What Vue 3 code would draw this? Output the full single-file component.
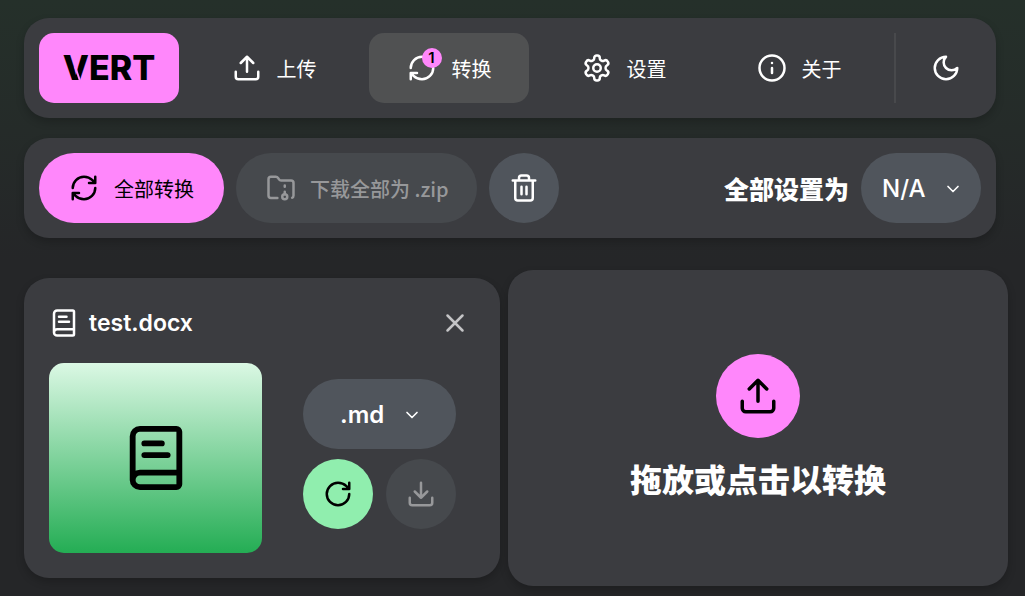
<script setup>
import { ref } from 'vue'

const dark = ref(true)
const allFormat = ref('N/A')
const fileFormat = ref('.md')
</script>

<template>
  <div class="page">
    <header class="panel navbar">
      <a class="logo" href="#" aria-label="VERT"><span class="wordmark">VERT</span></a>
      <nav class="links">
        <a class="link" href="#upload">
          <svg class="icon" viewBox="0 0 24 24"><path d="M12 3v12M17 8l-5-5-5 5M21 15v4a2 2 0 0 1-2 2H5a2 2 0 0 1-2-2v-4" /></svg>
          <span>上传</span>
        </a>
        <a class="link active" href="#convert">
          <span class="badged">
            <svg class="icon" viewBox="0 0 24 24"><path d="M3 12a9 9 0 0 1 9-9 9.75 9.75 0 0 1 6.74 2.74L21 8M21 3v5h-5M21 12a9 9 0 0 1-9 9 9.75 9.75 0 0 1-6.74-2.74L3 16M8 16H3v5" /></svg>
            <span class="badge">1</span>
          </span>
          <span>转换</span>
        </a>
        <a class="link" href="#settings">
          <svg class="icon" viewBox="0 0 24 24"><path d="M12.22 2h-.44a2 2 0 0 0-2 2v.18a2 2 0 0 1-1 1.73l-.43.25a2 2 0 0 1-2 0l-.15-.08a2 2 0 0 0-2.73.73l-.22.38a2 2 0 0 0 .73 2.73l.15.1a2 2 0 0 1 1 1.72v.51a2 2 0 0 1-1 1.74l-.15.09a2 2 0 0 0-.73 2.73l.22.38a2 2 0 0 0 2.73.73l.15-.08a2 2 0 0 1 2 0l.43.25a2 2 0 0 1 1 1.73V20a2 2 0 0 0 2 2h.44a2 2 0 0 0 2-2v-.18a2 2 0 0 1 1-1.73l.43-.25a2 2 0 0 1 2 0l.15.08a2 2 0 0 0 2.73-.73l.22-.39a2 2 0 0 0-.73-2.73l-.15-.08a2 2 0 0 1-1-1.74v-.5a2 2 0 0 1 1-1.74l.15-.09a2 2 0 0 0 .73-2.73l-.22-.38a2 2 0 0 0-2.73-.73l-.15.08a2 2 0 0 1-2 0l-.43-.25a2 2 0 0 1-1-1.73V4a2 2 0 0 0-2-2z" /><circle cx="12" cy="12" r="3" /></svg>
          <span>设置</span>
        </a>
        <a class="link" href="#about">
          <svg class="icon" viewBox="0 0 24 24"><circle cx="12" cy="12" r="10" /><path d="M12 16v-4M12 8h.01" /></svg>
          <span>关于</span>
        </a>
      </nav>
      <div class="divider"></div>
      <button class="theme" type="button" aria-label="切换主题" @click="dark = !dark">
        <svg class="icon" viewBox="0 0 24 24"><path d="M12 3a6 6 0 0 0 9 9 9 9 0 1 1-9-9Z" /></svg>
      </button>
    </header>

    <section class="panel toolbar">
      <button class="pill primary" type="button">
        <svg class="icon" viewBox="0 0 24 24"><path d="M3 12a9 9 0 0 1 9-9 9.75 9.75 0 0 1 6.74 2.74L21 8M21 3v5h-5M21 12a9 9 0 0 1-9 9 9.75 9.75 0 0 1-6.74-2.74L3 16M8 16H3v5" /></svg>
        全部转换
      </button>
      <button class="pill muted" type="button" disabled>
        <svg class="icon" viewBox="0 0 24 24"><circle cx="15" cy="19" r="2" /><path d="M20.9 19.8A2 2 0 0 0 22 18V8a2 2 0 0 0-2-2h-7.9a2 2 0 0 1-1.69-.9L9.6 3.9A2 2 0 0 0 7.93 3H4a2 2 0 0 0-2 2v13a2 2 0 0 0 2 2h5.1M15 11v-1M15 17v-2" /></svg>
        下载全部为 .zip
      </button>
      <button class="round slate" type="button" aria-label="清空">
        <svg class="icon" viewBox="0 0 24 24"><path d="M3 6h18M19 6v14a2 2 0 0 1-2 2H7a2 2 0 0 1-2-2V6M8 6V4a2 2 0 0 1 2-2h4a2 2 0 0 1 2 2v2M10 11v6M14 11v6" /></svg>
      </button>
      <label class="set-all" for="all-format">全部设置为</label>
      <div class="dropdown small">
        <select id="all-format" v-model="allFormat"><option>N/A</option></select>
        <svg class="icon chevron" viewBox="0 0 24 24"><path d="m6 9 6 6 6-6" /></svg>
      </div>
    </section>

    <main class="files">
      <article class="panel card">
        <div class="card-head">
          <svg class="icon" viewBox="0 0 24 24"><path d="M4 19.5v-15A2.5 2.5 0 0 1 6.5 2H19a1 1 0 0 1 1 1v18a1 1 0 0 1-1 1H6.5a1 1 0 0 1 0-5H20M8 11h8M8 7h6" /></svg>
          <h2>test.docx</h2>
          <button class="close" type="button" aria-label="移除">
            <svg class="icon" viewBox="0 0 24 24"><path d="M18 6 6 18M6 6l12 12" /></svg>
          </button>
        </div>
        <div class="card-body">
          <div class="preview">
            <svg class="icon" viewBox="0 0 24 24"><path d="M4 19.5v-15A2.5 2.5 0 0 1 6.5 2H19a1 1 0 0 1 1 1v18a1 1 0 0 1-1 1H6.5a1 1 0 0 1 0-5H20M8 11h8M8 7h6" /></svg>
          </div>
          <div class="actions">
            <div class="dropdown large">
              <select v-model="fileFormat" aria-label="格式"><option>.md</option></select>
              <svg class="icon chevron" viewBox="0 0 24 24"><path d="m6 9 6 6 6-6" /></svg>
            </div>
            <div class="action-row">
              <button class="round green" type="button" aria-label="转换">
                <svg class="icon" viewBox="0 0 24 24"><path d="M21 12a9 9 0 1 1-9-9c2.52 0 4.93 1 6.74 2.74L21 8M21 3v5h-5" /></svg>
              </button>
              <button class="round muted" type="button" aria-label="下载" disabled>
                <svg class="icon" viewBox="0 0 24 24"><path d="M21 15v4a2 2 0 0 1-2 2H5a2 2 0 0 1-2-2v-4M7 10l5 5 5-5M12 15V3" /></svg>
              </button>
            </div>
          </div>
        </div>
      </article>

      <button class="panel dropzone" type="button">
        <span class="drop-icon">
          <svg class="icon" viewBox="0 0 24 24"><path d="M12 3v12M17 8l-5-5-5 5M21 15v4a2 2 0 0 1-2 2H5a2 2 0 0 1-2-2v-4" /></svg>
        </span>
        <span>拖放或点击以转换</span>
      </button>
    </main>
  </div>
</template>

<style>
body {
  margin: 0;
  background: #252628;
}
</style>

<style scoped>
.page {
  box-sizing: border-box;
  min-height: 100vh;
  padding: 18px 29px 18px 24px;
  display: flex;
  flex-direction: column;
  gap: 20px;
  color: #fff;
  font-family: Inter, "Noto Sans CJK SC", sans-serif;
  font-size: 20px;
  background: linear-gradient(#25302a, #252628 260px);
}
button,
select {
  margin: 0;
  padding: 0;
  border: 0;
  color: inherit;
  font: inherit;
  background: none;
  cursor: pointer;
}
a {
  color: inherit;
  text-decoration: none;
}
.icon {
  display: block;
  flex: none;
  width: 30px;
  height: 30px;
  fill: none;
  stroke: currentColor;
  stroke-width: 2;
  stroke-linecap: round;
  stroke-linejoin: round;
}
.panel {
  box-sizing: border-box;
  border-radius: 25px;
  background: #3b3c40;
  box-shadow: 0 4px 8px rgba(0, 0, 0, 0.2);
}
.navbar {
  display: flex;
  gap: 15px;
  padding: 15px;
}
.logo {
  display: flex;
  align-items: center;
  justify-content: center;
  width: 140px;
  height: 70px;
  border-radius: 15px;
  color: #000;
  background: #ff87fb;
}
.wordmark {
  position: relative;
  font-size: 34px;
  font-weight: 800;
  line-height: 40px;
}
.wordmark::after {
  content: "";
  position: absolute;
  left: 14px;
  top: 18px;
  width: 2px;
  height: 18px;
  background: #ff87fb;
  transform: rotate(-19deg);
}
.links {
  flex: 1;
  display: grid;
  grid-template-columns: repeat(4, 1fr);
  gap: 15px;
}
.link {
  display: flex;
  align-items: center;
  justify-content: center;
  gap: 15px;
  border-radius: 15px;
}
.active {
  background: #505152;
}
.badged {
  position: relative;
}
.badge {
  position: absolute;
  top: -5px;
  right: -5px;
  width: 20px;
  height: 20px;
  border-radius: 50%;
  color: #000;
  background: #ff87fb;
  font-size: 15px;
  font-weight: 600;
  line-height: 20px;
  text-align: center;
}
.divider {
  width: 2px;
  background: #48494c;
}
.theme {
  display: grid;
  place-items: center;
  width: 70px;
  height: 70px;
}
.toolbar {
  display: flex;
  align-items: center;
  gap: 12px;
  padding: 15px;
}
.pill {
  display: flex;
  align-items: center;
  gap: 15px;
  height: 70px;
  padding: 0 30px;
  border-radius: 35px;
}
.primary {
  color: #000;
  background: #ff87fb;
}
.muted {
  color: #97989a;
  background: #46494d;
  font-family: "Noto Sans CJK SC", sans-serif;
  font-weight: 500;
  cursor: default;
}
.pill.muted {
  gap: 14px;
  padding-right: 28px;
}
.round {
  display: grid;
  place-items: center;
  width: 70px;
  height: 70px;
  border-radius: 50%;
}
.slate {
  background: #50555c;
}
.green {
  color: #000;
  background: #90eeae;
}
.set-all {
  margin-left: auto;
  font-size: 25px;
  font-weight: 900;
}
.dropdown {
  position: relative;
}
.dropdown select {
  appearance: none;
  display: block;
  width: 100%;
  height: 70px;
  border-radius: 35px;
  background: #50555c;
  font-size: 24px;
  font-weight: 500;
}
.small {
  width: 120px;
}
.small select {
  padding-left: 21px;
}
.large select {
  padding-left: 37px;
  font-weight: 600;
}
.chevron {
  position: absolute;
  top: 26px;
  right: 18px;
  width: 20px;
  height: 20px;
  pointer-events: none;
}
.large .chevron {
  right: 34px;
}
.files {
  display: grid;
  grid-template-columns: 1fr 1fr;
  gap: 20px;
  margin-top: 20px;
}
.card {
  padding: 25px;
}
.card-head {
  display: flex;
  align-items: center;
  gap: 10px;
  height: 40px;
}
.card-head h2 {
  flex: 1;
  margin: 0;
  font-size: 23px;
  font-weight: 600;
}
.close {
  display: grid;
  place-items: center;
  width: 40px;
  height: 40px;
  color: #c4c4c6;
}
.card-body {
  display: grid;
  grid-template-columns: 1fr 1fr;
  margin-top: 20px;
}
.preview {
  display: grid;
  place-items: center;
  height: 190px;
  border-radius: 15px;
  color: #000;
  background: linear-gradient(#dbf8e4, #24ad54);
}
.preview .icon {
  width: 70px;
  height: 70px;
}
.actions {
  display: flex;
  flex-direction: column;
  justify-content: center;
  gap: 10px;
  padding: 0 19px 8px 41px;
}
.action-row {
  display: flex;
  justify-content: space-between;
}
.dropzone {
  display: flex;
  flex-direction: column;
  align-items: center;
  justify-content: center;
  gap: 22px;
  margin: -8px -12px;
  font-size: 32px;
  font-weight: 900;
  line-height: 42px;
}
.drop-icon {
  display: grid;
  place-items: center;
  width: 84px;
  height: 84px;
  border-radius: 50%;
  color: #000;
  background: #ff87fb;
}
.drop-icon .icon {
  width: 42px;
  height: 42px;
}
</style>
